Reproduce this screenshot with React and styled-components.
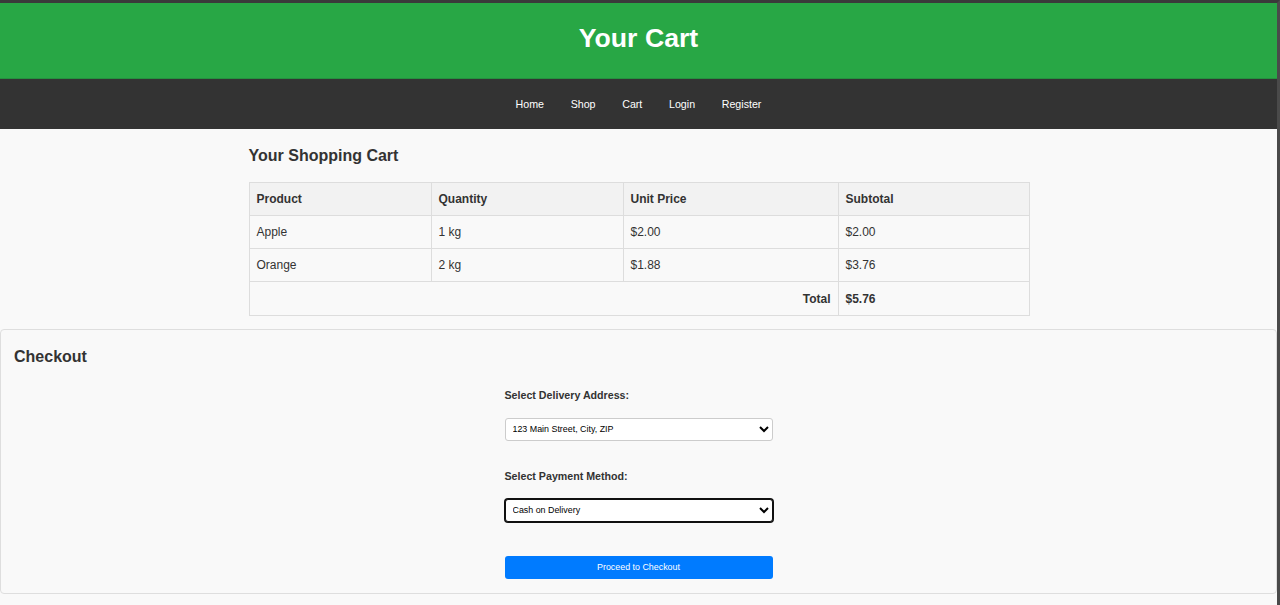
import React from "react";
import styled, { createGlobalStyle } from "styled-components";

const Global = createGlobalStyle`
  html, body { margin: 0; padding: 0; background: #f9f9f9; }
  body { font-family: "Liberation Sans", Arial, sans-serif; color: #333; }
  * { box-sizing: border-box; }
`;

const Frame = styled.div`
  min-height: 100vh;
  border-top: 3px solid #3a3a3a;
  border-right: 3px solid #4a4a4a;
  background: #f9f9f9;
`;

const Header = styled.header`
  height: 76px;
  padding-bottom: 4px;
  background: #28a745;
  display: flex;
  align-items: center;
  justify-content: center;
  border-bottom: 1px solid #25903f;
`;

const Title = styled.h1`
  margin: 0;
  color: #fff;
  font-size: 26.67px;
  font-weight: bold;
  line-height: 1;
`;

const Nav = styled.nav`
  height: 49.5px;
  background: #333;
  display: flex;
  align-items: center;
  justify-content: center;
  gap: 26.67px;
`;

const NavLink = styled.a`
  color: #fff;
  font-size: 10.67px;
  text-decoration: none;
`;

const Main = styled.main`
  width: 780px;
  margin: 0 auto;
  padding-top: 18px;
`;

const SectionTitle = styled.h2`
  margin: 0;
  font-size: 16px;
  line-height: 18px;
  font-weight: bold;
  color: #333;
`;

const Table = styled.table`
  margin-top: 17px;
  width: 780px;
  border-collapse: collapse;
  table-layout: fixed;
  font-size: 12px;
  color: #333;
`;

const Cell = styled.td`
  border: 1px solid #ddd;
  padding: 0 7px;
  height: 33.3px;
  line-height: 14px;
  text-align: ${(p) => (p.$right ? "right" : "left")};
  font-weight: ${(p) => (p.$bold ? "bold" : "normal")};
`;

const Head = styled.th`
  border: 1px solid #ddd;
  padding: 0 7px;
  height: 33.3px;
  line-height: 14px;
  text-align: left;
  font-weight: bold;
  background: #f2f2f2;
`;

const Checkout = styled.section`
  margin-top: 13px;
  border: 1px solid #dedede;
  border-radius: 4px;
  background: #f9f9f9;
  padding: 18px 13px 14px;
`;

const Form = styled.form`
  width: 268px;
  margin: 23px auto 0;
  display: flex;
  flex-direction: column;
`;

const Label = styled.label`
  display: block;
  font-size: 10.67px;
  line-height: 12.5px;
  font-weight: bold;
  color: #333;
  margin-top: ${(p) => p.$gap || 0}px;
`;

const Select = styled.select`
  margin-top: 16.5px;
  width: 268px;
  height: 23px;
  padding: 0 3px;
  font-family: "Liberation Sans", Arial, sans-serif;
  font-size: 8.9px;
  color: #000;
  background: #fff;
  border: 1px solid ${(p) => (p.$focused ? "#111" : "#ccc")};
  box-shadow: ${(p) => (p.$focused ? "0 0 0 1px #111" : "none")};
  border-radius: 3px;
  outline: none;
`;

const Button = styled.button`
  margin-top: 34px;
  width: 268px;
  height: 23px;
  border: none;
  border-radius: 3px;
  background: #007bff;
  color: #fff;
  font-family: "Liberation Sans", Arial, sans-serif;
  font-size: 8.9px;
  cursor: pointer;
`;

const items = [
  { name: "Apple", qty: "1 kg", price: "$2.00", sub: "$2.00" },
  { name: "Orange", qty: "2 kg", price: "$1.88", sub: "$3.76" },
];

export default function App() {
  return (
    <>
      <Global />
      <Frame>
        <Header>
          <Title>Your Cart</Title>
        </Header>
        <Nav>
          {["Home", "Shop", "Cart", "Login", "Register"].map((l) => (
            <NavLink key={l} href="#">
              {l}
            </NavLink>
          ))}
        </Nav>
        <Main>
          <SectionTitle>Your Shopping Cart</SectionTitle>
          <Table>
            <colgroup>
              <col style={{ width: 182 }} />
              <col style={{ width: 192 }} />
              <col style={{ width: 215 }} />
              <col style={{ width: 191 }} />
            </colgroup>
            <thead>
              <tr>
                <Head>Product</Head>
                <Head>Quantity</Head>
                <Head>Unit Price</Head>
                <Head>Subtotal</Head>
              </tr>
            </thead>
            <tbody>
              {items.map((it) => (
                <tr key={it.name}>
                  <Cell>{it.name}</Cell>
                  <Cell>{it.qty}</Cell>
                  <Cell>{it.price}</Cell>
                  <Cell>{it.sub}</Cell>
                </tr>
              ))}
              <tr>
                <Cell colSpan={3} $right $bold>
                  Total
                </Cell>
                <Cell $bold>$5.76</Cell>
              </tr>
            </tbody>
          </Table>
        </Main>
        <Checkout>
          <SectionTitle>Checkout</SectionTitle>
          <Form onSubmit={(e) => e.preventDefault()}>
            <Label>Select Delivery Address:</Label>
            <Select defaultValue="a1">
              <option value="a1">123 Main Street, City, ZIP</option>
            </Select>
            <Label $gap={29}>Select Payment Method:</Label>
            <Select $focused defaultValue="cod">
              <option value="cod">Cash on Delivery</option>
            </Select>
            <Button type="submit">Proceed to Checkout</Button>
          </Form>
        </Checkout>
      </Frame>
    </>
  );
}
